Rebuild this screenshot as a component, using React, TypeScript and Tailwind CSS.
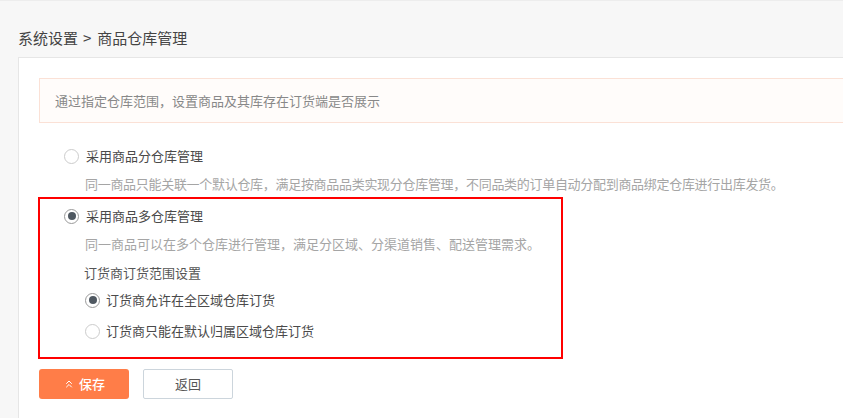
import React from 'react';
import {ChevronsUp} from 'lucide-react';

const font = {fontFamily: '"Noto Sans CJK SC", "Noto Sans", sans-serif'};

const Radio = ({checked}: {checked?: boolean}) => (
    <span
        className={`w-[15px] h-[15px] rounded-full border bg-white flex items-center justify-center shrink-0 ${checked ? 'border-[#9a9a9a]' : 'border-[#cccccc]'}`}>
        {checked && <span className="w-[8px] h-[8px] rounded-full bg-[#4f5861]"/>}
    </span>
);

const App = () => {
    return (
        <div className="w-[843px] h-[418px] overflow-hidden bg-[#f7f7f7] border-t border-[#ededed]" style={font}>
            <div className="pl-[18px] pt-[27px] h-[20px] leading-[20px] text-[15px] text-[#444] box-content flex">
                <span>系统设置</span>
                <span className="ml-[5px] mr-[6px]">&gt;</span>
                <span>商品仓库管理</span>
            </div>

            <div className="mt-[9px] ml-[18px] w-[900px] h-[400px] bg-white border border-[#e6e6e6] pt-[20px] pl-[20px]">
                <div
                    className="h-[45px] border border-[#fbe1d6] bg-[#fffcfa] pl-[15px] flex items-center text-[13px] text-[#888]">
                    通过指定仓库范围，设置商品及其库存在订货端是否展示
                </div>

                <div className="mt-[23px] pl-[25px] h-[20px] flex items-center gap-[7px] text-[13px] text-[#4a4a4a]">
                    <Radio/>
                    <span className="leading-[20px]">采用商品分仓库管理</span>
                </div>
                <div className="mt-[8px] pl-[46px] h-[20px] leading-[20px] text-[13px] text-[#a5a5a5] tracking-[-0.3px]">
                    同一商品只能关联一个默认仓库，满足按商品品类实现分仓库管理，不同品类的订单自动分配到商品绑定仓库进行出库发货。
                </div>

                <div className="mt-[3px] -ml-[1px] w-[525px] border-2 border-[#ff0000] pt-[7px] pb-[16px]">
                    <div className="pl-[24px] h-[20px] flex items-center gap-[7px] text-[13px] text-[#4a4a4a]">
                        <Radio checked/>
                        <span className="leading-[20px]">采用商品多仓库管理</span>
                    </div>
                    <div className="mt-[8px] pl-[45px] h-[20px] leading-[20px] text-[13px] text-[#a5a5a5]">
                        同一商品可以在多个仓库进行管理，满足分区域、分渠道销售、配送管理需求。
                    </div>
                    <div className="mt-[9px] pl-[44px] h-[20px] leading-[20px] text-[13px] text-[#555]">
                        订货商订货范围设置
                    </div>
                    <div className="mt-[7px] pl-[45px] h-[20px] flex items-center gap-[6px] text-[13px] text-[#4a4a4a]">
                        <Radio checked/>
                        <span className="leading-[20px]">订货商允许在全区域仓库订货</span>
                    </div>
                    <div className="mt-[11px] pl-[45px] h-[20px] flex items-center gap-[6px] text-[13px] text-[#4a4a4a]">
                        <Radio/>
                        <span className="leading-[20px]">订货商只能在默认归属区域仓库订货</span>
                    </div>
                </div>

                <div className="mt-[10px] flex gap-[14px]">
                    <button
                        className="w-[90px] h-[30px] rounded-[3px] bg-[#ff7d48] text-white text-[13px] font-medium flex items-center justify-center gap-[4px]">
                        <ChevronsUp size={12} strokeWidth={2}/>
                        保存
                    </button>
                    <button
                        className="w-[90px] h-[30px] rounded-[2px] bg-white border border-[#ccd5dc] text-[#555] text-[13px] flex items-center justify-center">
                        返回
                    </button>
                </div>
            </div>
        </div>
    );
};

export default App;
